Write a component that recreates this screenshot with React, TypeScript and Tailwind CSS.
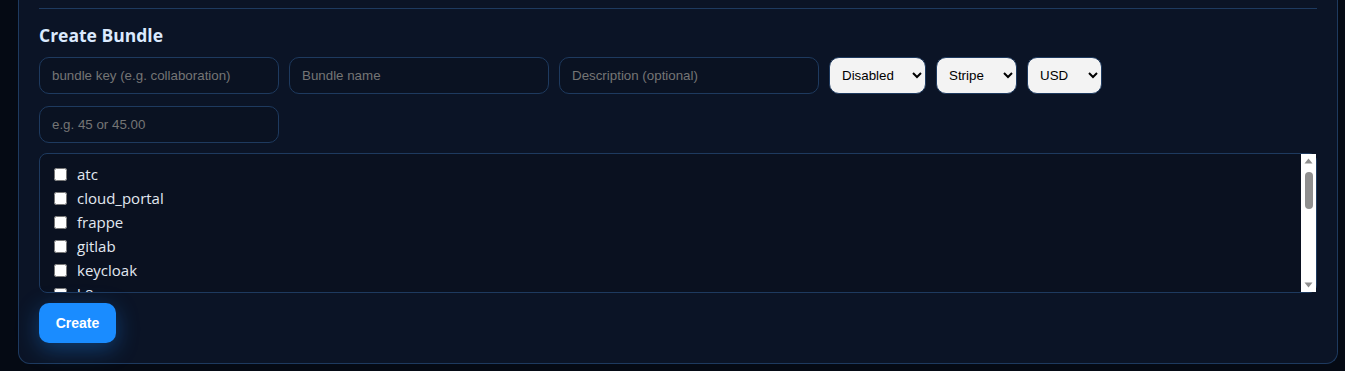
import React, { useState } from 'react';

const services = ['atc', 'cloud_portal', 'frappe', 'gitlab', 'keycloak', 'k8s', 'mattermost', 'nextcloud', 'odoo', 'wiki'];

const inputCls =
  "h-[37px] rounded-[10px] border border-[#1e3a5f] bg-[#0a1222] px-3 text-[13.33px] text-[#e2e8f0] placeholder:text-[#757575] outline-none font-['Liberation_Sans',Arial,sans-serif]";
const selectCls =
  "h-[37px] rounded-[10px] border border-[#1e3a5f] bg-[#f3f3f3] px-2 text-[13.33px] text-black font-['Liberation_Sans',Arial,sans-serif]";

// the screenshot browser hides native scrollbars, so draw the classic one
const ScrollBar = () => (
  <div className="flex w-[15px] shrink-0 flex-col items-center bg-white">
    <svg width="15" height="15" viewBox="0 0 15 15">
      <path d="M3.5 9.5 L7.5 4.5 L11.5 9.5 Z" fill="#8f8f8f" />
    </svg>
    <div className="mt-[3px] h-[37px] w-[8px] rounded-full bg-[#8f8f8f]" />
    <div className="flex-1" />
    <svg width="15" height="15" viewBox="0 0 15 15">
      <path d="M3.5 5.5 L7.5 10.5 L11.5 5.5 Z" fill="#8f8f8f" />
    </svg>
  </div>
);

export default function App() {
  const [checked, setChecked] = useState<Record<string, boolean>>({});

  return (
    <div className="h-[371px] overflow-hidden bg-[#050a14] pl-[18px] pr-[7px]">
      <div className="rounded-b-[12px] border-x border-b border-[#1e3a5f] bg-[#0b1426] px-5 pt-2 pb-5">
        <div className="h-px bg-[#1e3a5f]" />
        <h2 className="mt-[14px] text-[17.5px] leading-[24px] font-bold text-[#dbeafe] font-['Open_Sans','Noto_Sans',sans-serif]">
          Create Bundle
        </h2>
        <div className="mt-[10px] flex flex-wrap gap-x-[10px] gap-y-[12px]">
          <input className={`${inputCls} w-[240px]`} placeholder="bundle key (e.g. collaboration)" />
          <input className={`${inputCls} w-[260px]`} placeholder="Bundle name" />
          <input className={`${inputCls} w-[260px]`} placeholder="Description (optional)" />
          <select className={`${selectCls} w-[97px]`} defaultValue="disabled">
            <option value="disabled">Disabled</option>
            <option value="enabled">Enabled</option>
          </select>
          <select className={`${selectCls} w-[81px]`} defaultValue="stripe">
            <option value="stripe">Stripe</option>
            <option value="manual">Manual</option>
          </select>
          <select className={`${selectCls} w-[75px]`} defaultValue="usd">
            <option value="usd">USD</option>
            <option value="eur">EUR</option>
          </select>
          <input className={`${inputCls} w-[240px]`} placeholder="e.g. 45 or 45.00" />
        </div>
        <div className="mt-[10px] flex h-[140px] rounded-[8px] border border-[#1e3a5f] bg-[#0a1120]">
          <div className="flex-1 overflow-hidden px-[14px] py-2">
            {services.map((s) => (
              <label key={s} className="flex h-[24px] items-center gap-[10px] text-[15px] text-[#e2e8f0] font-['Open_Sans','Noto_Sans',sans-serif]">
                <input
                  type="checkbox"
                  className="m-0 h-[13px] w-[13px]"
                  checked={!!checked[s]}
                  onChange={(e) => setChecked({ ...checked, [s]: e.target.checked })}
                />
                {s}
              </label>
            ))}
          </div>
          <ScrollBar />
        </div>
        <button className="mt-[10px] h-[40px] w-[77px] rounded-[10px] bg-[#1a8cff] text-[14px] font-extrabold text-white shadow-[0_6px_22px_rgba(26,140,255,0.35)] font-['Liberation_Sans',Arial,sans-serif]">
          Create
        </button>
      </div>
    </div>
  );
}
